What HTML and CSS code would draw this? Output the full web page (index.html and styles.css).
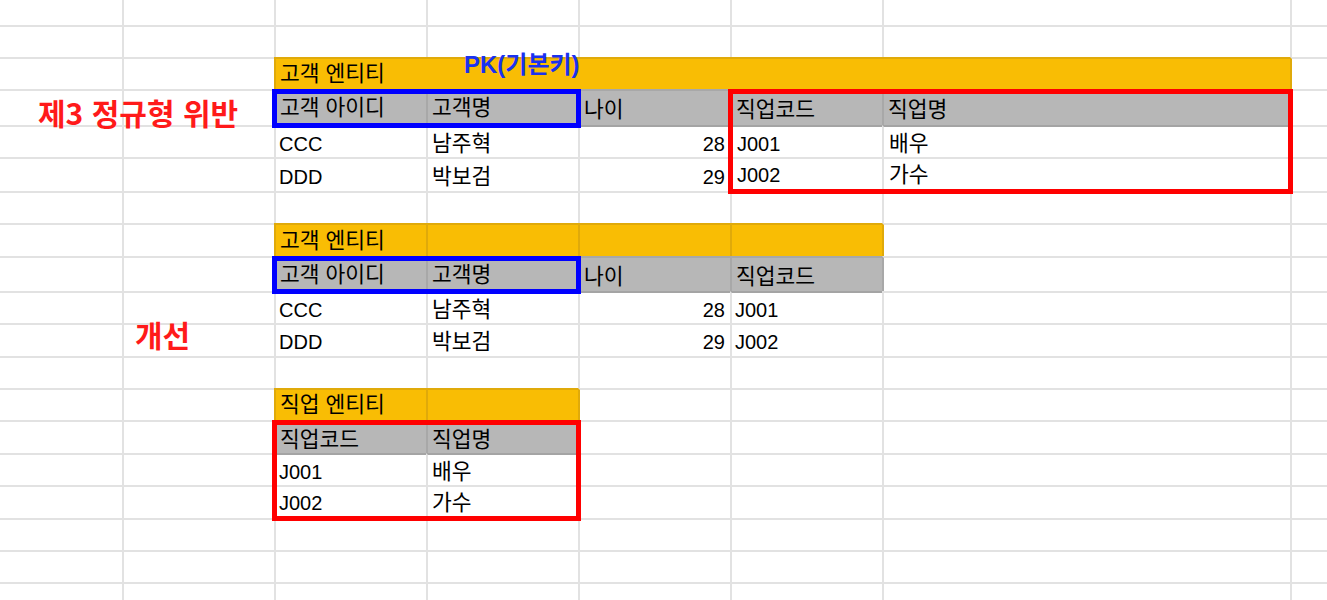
FILE: index.html
```html
<!DOCTYPE html>
<html lang="ko">
<head>
    <meta charset="UTF-8">
    <meta name="viewport" content="width=device-width, initial-scale=1.0">
    <title>제3 정규형</title>
    <link rel="stylesheet" href="styles.css">
</head>
<body>

    <div class="sheet">
        <!-- 1행 -->
        <div class="row first">
            <div class="cell"></div><div class="cell"></div><div class="cell"></div><div class="cell"></div>
            <div class="cell"></div><div class="cell"></div><div class="cell"></div><div class="cell"></div>
        </div>
        <div class="row">
            <div class="cell"></div><div class="cell"></div><div class="cell"></div><div class="cell"></div>
            <div class="cell"></div><div class="cell"></div><div class="cell"></div><div class="cell"></div>
        </div>

        <!-- 첫 번째 표: 위반 -->
        <div class="row">
            <div class="cell"></div><div class="cell"></div>
            <div class="cell yellow span5">고객 엔티티</div>
            <div class="cell edge-y"></div>
        </div>
        <div class="row">
            <div class="cell"></div><div class="cell"></div>
            <div class="cell head pk">고객 아이디</div>
            <div class="cell head pk">고객명</div>
            <div class="cell head">나이</div>
            <div class="cell head">직업코드</div>
            <div class="cell head">직업명</div>
            <div class="cell edge-g"></div>
        </div>
        <div class="row">
            <div class="cell"></div><div class="cell"></div>
            <div class="cell under en">CCC</div>
            <div class="cell under">남주혁</div>
            <div class="cell under en num">28</div>
            <div class="cell under en moved">J001</div>
            <div class="cell under moved">배우</div>
            <div class="cell"></div>
        </div>
        <div class="row">
            <div class="cell"></div><div class="cell"></div>
            <div class="cell en">DDD</div>
            <div class="cell">박보검</div>
            <div class="cell en num">29</div>
            <div class="cell en moved up">J002</div>
            <div class="cell moved up">가수</div>
            <div class="cell"></div>
        </div>
        <div class="row">
            <div class="cell"></div><div class="cell"></div><div class="cell"></div><div class="cell"></div>
            <div class="cell"></div><div class="cell"></div><div class="cell"></div><div class="cell"></div>
        </div>

        <!-- 두 번째 표: 개선 -->
        <div class="row">
            <div class="cell"></div><div class="cell"></div>
            <div class="cell yellow">고객 엔티티</div>
            <div class="cell yellow"></div>
            <div class="cell yellow"></div>
            <div class="cell yellow"></div>
            <div class="cell edge-y"></div><div class="cell"></div>
        </div>
        <div class="row">
            <div class="cell"></div><div class="cell"></div>
            <div class="cell head pk">고객 아이디</div>
            <div class="cell head pk">고객명</div>
            <div class="cell head">나이</div>
            <div class="cell head">직업코드</div>
            <div class="cell edge-g"></div><div class="cell"></div>
        </div>
        <div class="row">
            <div class="cell"></div><div class="cell"></div>
            <div class="cell under en">CCC</div>
            <div class="cell under">남주혁</div>
            <div class="cell under en num">28</div>
            <div class="cell under en">J001</div>
            <div class="cell"></div><div class="cell"></div>
        </div>
        <div class="row">
            <div class="cell"></div><div class="cell"></div>
            <div class="cell en">DDD</div>
            <div class="cell">박보검</div>
            <div class="cell en num">29</div>
            <div class="cell en">J002</div>
            <div class="cell"></div><div class="cell"></div>
        </div>
        <div class="row">
            <div class="cell"></div><div class="cell"></div><div class="cell"></div><div class="cell"></div>
            <div class="cell"></div><div class="cell"></div><div class="cell"></div><div class="cell"></div>
        </div>

        <!-- 세 번째 표: 직업 -->
        <div class="row">
            <div class="cell"></div><div class="cell"></div>
            <div class="cell yellow">직업 엔티티</div>
            <div class="cell yellow"></div>
            <div class="cell edge-y"></div><div class="cell"></div><div class="cell"></div><div class="cell"></div>
        </div>
        <div class="row">
            <div class="cell"></div><div class="cell"></div>
            <div class="cell head">직업코드</div>
            <div class="cell head">직업명</div>
            <div class="cell edge-g"></div><div class="cell"></div><div class="cell"></div><div class="cell"></div>
        </div>
        <div class="row">
            <div class="cell"></div><div class="cell"></div>
            <div class="cell under en">J001</div>
            <div class="cell under">배우</div>
            <div class="cell"></div><div class="cell"></div><div class="cell"></div><div class="cell"></div>
        </div>
        <div class="row">
            <div class="cell"></div><div class="cell"></div>
            <div class="cell en up">J002</div>
            <div class="cell up">가수</div>
            <div class="cell"></div><div class="cell"></div><div class="cell"></div><div class="cell"></div>
        </div>
        <div class="row">
            <div class="cell"></div><div class="cell"></div><div class="cell"></div><div class="cell"></div>
            <div class="cell"></div><div class="cell"></div><div class="cell"></div><div class="cell"></div>
        </div>
        <div class="row">
            <div class="cell"></div><div class="cell"></div><div class="cell"></div><div class="cell"></div>
            <div class="cell"></div><div class="cell"></div><div class="cell"></div><div class="cell"></div>
        </div>
        <div class="row">
            <div class="cell"></div><div class="cell"></div><div class="cell"></div><div class="cell"></div>
            <div class="cell"></div><div class="cell"></div><div class="cell"></div><div class="cell"></div>
        </div>

        <!-- 강조 테두리 -->
        <div class="box box-blue box-pk1"></div>
        <div class="box box-red box-job1"></div>
        <div class="box box-blue box-pk2"></div>
        <div class="box box-red box-job2"></div>

        <!-- 메모 텍스트 -->
        <div class="note note-bad">제3 정규형 위반</div>
        <div class="note note-fix">개선</div>
        <div class="note-pk">PK(기본키)</div>
    </div>

</body>
</html>
```

FILE: styles.css
```css
/* 기본 페이지 */
body {
    margin: 0;
    background-color: #ffffff;
    font-family: 'Liberation Sans', 'Noto Sans CJK KR', sans-serif;
}

/* 시트 격자 */
.sheet {
    position: relative;
    display: grid;
    grid-template-columns: 122px 152px 152px 152px 152px 152px 408px 1fr;
    grid-template-rows: 25px 32px 32px 36px 32px 34px 32px 33px 35px 32px 33px 32px 32px 33px 32px 33px 32px 32px 32px;
    height: 600px;
    overflow: hidden;
}

.row {
    display: contents;
}

.cell {
    display: flex;
    align-items: center;
    min-width: 0;
    padding: 3px 5px 0 4px;
    border-top: 2px solid #e2e2e2;
    border-left: 2px solid #e2e2e2;
    font-size: 21.5px;
    line-height: 22px;
    color: #000000;
    white-space: nowrap;
}

.cell.en {
    font-size: 20px;
    padding-left: 3px;
}

.row > .cell:first-child {
    border-left: 0;
}

.row.first > .cell {
    border-top: 0;
}

/* 채우기 색 */
.yellow {
    background-color: #f9bd04;
    border-color: #e0aa0a;
    padding-top: 0;
}

.head {
    background-color: #b7b7b7;
    border-color: #a8a8a8;
    padding-top: 4px;
}

.head.pk {
    padding-top: 0;
}

.under {
    border-top-color: #a4a4a4;
}

.edge-y {
    border-left-color: #e0aa0a;
}

.edge-g {
    border-left-color: #a8a8a8;
}

.span5 {
    grid-column: span 5;
}

.num {
    justify-content: flex-end;
}

.cell.moved {
    padding-left: 5px;
}

.up {
    padding-top: 0;
}

/* 강조 테두리 */
.box {
    position: absolute;
    top: 0;
    right: -3px;
    bottom: -3px;
    left: -2px;
    border: 5px solid;
    pointer-events: none;
}

.box-blue { border-color: #0000ff; }
.box-red { border-color: #ff0000; }

.box-pk1 { grid-row: 4 / 5; grid-column: 3 / 5; }
.box-job1 { grid-row: 4 / 7; grid-column: 6 / 8; }
.box-pk2 { grid-row: 9 / 10; grid-column: 3 / 5; }
.box-job2 { grid-row: 14 / 17; grid-column: 3 / 5; }

/* 메모 */
.note {
    position: absolute;
    font-family: 'Noto Sans CJK KR', sans-serif;
    font-size: 30px;
    line-height: 30px;
    font-weight: 700;
    color: #ff1a1a;
    white-space: nowrap;
}

.note-bad {
    left: 38px;
    top: 97px;
}

.note-fix {
    left: 135px;
    top: 319px;
}

.note-pk {
    position: absolute;
    left: 464px;
    top: 53px;
    font-size: 24px;
    line-height: 24px;
    font-weight: 700;
    color: #1a32f0;
    white-space: nowrap;
}
```
